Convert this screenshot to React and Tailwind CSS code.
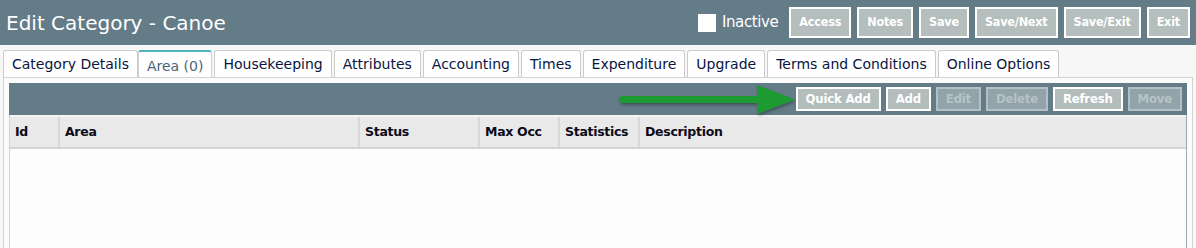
import React from 'react';

const headerButtons = ['Access', 'Notes', 'Save', 'Save/Next', 'Save/Exit', 'Exit'];

const tabs = [
  'Category Details',
  'Area (0)',
  'Housekeeping',
  'Attributes',
  'Accounting',
  'Times',
  'Expenditure',
  'Upgrade',
  'Terms and Conditions',
  'Online Options',
];

const toolButtons = [
  { name: 'Quick Add', disabled: false },
  { name: 'Add', disabled: false },
  { name: 'Edit', disabled: true },
  { name: 'Delete', disabled: true },
  { name: 'Refresh', disabled: false },
  { name: 'Move', disabled: true },
];

const columns = [
  { name: 'Id', w: 'w-[50px]' },
  { name: 'Area', w: 'w-[300px]' },
  { name: 'Status', w: 'w-[120px]' },
  { name: 'Max Occ', w: 'w-[80px]' },
  { name: 'Statistics', w: 'w-[80px]' },
  { name: 'Description', w: 'flex-1' },
];

const GreenArrow = () => (
  <svg width="186" height="34" viewBox="0 0 186 34" className="shrink-0">
    <defs>
      <filter id="sh" x="-10%" y="-30%" width="120%" height="160%">
        <feDropShadow dx="1" dy="2" stdDeviation="1.5" floodColor="#000" floodOpacity="0.35" />
      </filter>
    </defs>
    <g filter="url(#sh)">
      <rect x="4" y="13" width="144" height="7" rx="3.5" fill="#1f9b30" />
      <path d="M142 2 L180 16.5 L142 31 Z" fill="#1f9b30" />
    </g>
  </svg>
);

export default function App() {
  return (
    <div className="w-[1196px] h-[248px] overflow-hidden bg-[#f7f7f7] font-['DejaVu_Sans',sans-serif]">
      <div className="h-[45px] bg-[#647b88] flex items-center justify-between pl-[6px] pr-[6px]">
        <h1 className="text-white text-[20px] leading-none">
          Edit Category - Canoe
        </h1>
        <div className="flex items-center">
          <span className="w-[18px] h-[18px] bg-white mr-[6px]" />
          <span className="text-white text-[15px] mr-[11px] tracking-[-0.4px]">Inactive</span>
          <div className="flex gap-[6px]">
            {headerButtons.map((b) => (
              <button
                key={b}
                className="h-[31px] px-[8px] bg-[#b4bebd] border-2 border-white text-white text-[12.5px] font-bold font-['DejaVu_Sans_Condensed','DejaVu_Sans',sans-serif] tracking-[-0.2px]"
              >
                {b}
              </button>
            ))}
          </div>
        </div>
      </div>

      <div className="flex px-[3px] pt-[5px] gap-[2px] text-[14px]">
        {tabs.map((t, i) => {
          const active = i === 1;
          return (
            <div
              key={t}
              className={
                active
                  ? 'h-[27px] px-[8px] flex items-center bg-white border border-b-0 border-[#d2d2d2] border-t-2 border-t-[#4fb4bf] rounded-t-[3px] text-[#4c6677] pt-[3px] -ml-[2px]'
                  : 'h-[27px] px-[8px] flex items-center bg-white border border-b-0 border-[#cbcbcb] rounded-t-[3px] text-[#08163f]'
              }
            >
              {t}
            </div>
          );
        })}
      </div>

      <div className="mx-[3px] border border-[#d3d3d3] bg-[#fbfbfb] h-[200px] px-[5px] pt-[5px]">
        <div className="h-[32px] bg-[#647b88] flex items-center justify-end pr-[5px] gap-[5px]">
          <div className="mr-[-10px] mt-[2px]">
            <GreenArrow />
          </div>
          {toolButtons.map((b) => (
            <button
              key={b.name}
              className={
                b.disabled
                  ? "h-[24px] px-[8px] bg-[#93a3aa] border-2 border-[#b3c0c5] text-[#b6c3c7] text-[13px] font-bold font-['DejaVu_Sans_Condensed','DejaVu_Sans',sans-serif] tracking-[-0.2px]"
                  : "h-[24px] px-[8px] bg-[#b2bdbc] border-2 border-white text-white text-[13px] font-bold font-['DejaVu_Sans_Condensed','DejaVu_Sans',sans-serif] tracking-[-0.2px]"
              }
            >
              {b.name}
            </button>
          ))}
        </div>
        <div className="border-l border-r border-[#cfd4d6] border-r-[#9ea9ae] h-full bg-[#fdfdfd]">
          <div className="flex h-[34px] bg-[#e9e9e9] border-t-2 border-t-[#f3f3f3] border-b-2 border-b-[#d4d4d4]">
            {columns.map((c, i) => (
              <div
                key={c.name}
                className={`${c.w} flex items-center px-[5px] text-[12.5px] font-bold text-[#0b0b1a] tracking-[-0.3px] ${i < columns.length - 1 ? 'border-r-2 border-[#d6d6d6]' : ''}`}
              >
                {c.name}
              </div>
            ))}
          </div>
        </div>
      </div>
    </div>
  );
}
